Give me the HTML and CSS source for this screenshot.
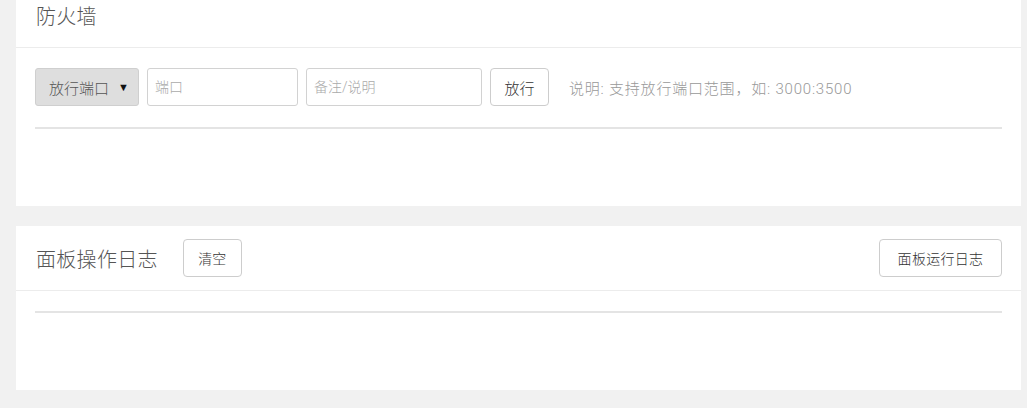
FILE: index.html
```html
<!DOCTYPE html>
<html lang="zh-CN">
<head>
<meta charset="utf-8">
<title>防火墙</title>
<link rel="stylesheet" href="styles.css">
</head>
<body>
<div class="page">
  <section class="card">
    <div class="card-head">
      <h2 class="card-title">防火墙</h2>
    </div>
    <div class="card-body">
      <div class="form-row">
        <div class="select">放行端口<span class="caret">▼</span></div>
        <input class="field field-port" type="text" placeholder="端口">
        <input class="field field-note" type="text" placeholder="备注/说明">
        <button class="btn" type="button">放行</button>
        <span class="hint">说明: 支持放行端口范围，如: 3000:3500</span>
      </div>
      <div class="table-line table-line-gap"></div>
      <div class="table-empty"></div>
    </div>
  </section>

  <section class="card">
    <div class="card-head">
      <h2 class="card-title">面板操作日志</h2>
      <button class="btn btn-clear" type="button">清空</button>
      <button class="btn btn-right" type="button">面板运行日志</button>
    </div>
    <div class="card-body">
      <div class="table-line"></div>
      <div class="table-empty"></div>
    </div>
  </section>
</div>
</body>
</html>
```

FILE: styles.css
```css
html, body {
  margin: 0;
  padding: 0;
  background: #f1f1f1;
  font-family: Roboto, "Noto Sans CJK SC", sans-serif;
  font-weight: 300;
  color: #333;
}

.page {
  padding: 0 6px 0 16px;
  margin-top: -17px;
  display: flex;
  flex-direction: column;
  gap: 20px;
}

.card {
  background: #fff;
}

.card-head {
  height: 64px;
  padding: 0 19px 0 20px;
  border-bottom: 1px solid #ececec;
  display: flex;
  align-items: center;
}

.card-title {
  margin: 0;
  font-size: 20px;
  font-weight: 300;
  color: #555;
  letter-spacing: 0.3px;
}

.card-body {
  padding: 20px 19px 0 19px;
}

.form-row {
  display: flex;
  align-items: center;
  height: 38px;
}

.select {
  box-sizing: border-box;
  width: 104px;
  height: 38px;
  padding: 0 9px 0 13px;
  background: #dedede;
  border: 1px solid #cfcfcf;
  border-radius: 3px;
  display: flex;
  align-items: center;
  justify-content: space-between;
  font-size: 15px;
  font-weight: 300;
  color: #555;
}

.caret {
  font-family: "DejaVu Sans", sans-serif;
  font-size: 11px;
  color: #111;
}

.field {
  box-sizing: border-box;
  height: 38px;
  margin-left: 8px;
  padding: 0 7px;
  border: 1px solid #d2d2d2;
  border-radius: 3px;
  font-family: Roboto, "Noto Sans CJK SC", sans-serif;
  font-weight: 300;
  font-size: 14px;
  color: #333;
  background: #fff;
  outline: none;
}

.field::placeholder {
  color: #aaa;
}

.field-port {
  width: 151px;
}

.field-note {
  width: 176px;
}

.btn {
  box-sizing: border-box;
  height: 38px;
  padding: 0 14px;
  background: #fff;
  border: 1px solid #cdcdcd;
  border-radius: 4px;
  font-family: Roboto, "Noto Sans CJK SC", sans-serif;
  font-weight: 300;
  font-size: 15px;
  color: #333;
  cursor: pointer;
}

.form-row .btn {
  margin-left: 8px;
  width: 59px;
  padding: 0;
}

.hint {
  margin-left: 20px;
  font-size: 15px;
  letter-spacing: 0.8px;
  color: #999;
  white-space: nowrap;
}

.btn-clear {
  margin-left: 25px;
  width: 59px;
  padding: 0;
  font-size: 14px;
}

.btn-right {
  margin-left: auto;
  width: 123px;
  padding: 0;
  font-size: 14px;
  letter-spacing: 0.3px;
}

.table-line {
  height: 2px;
  background: #e4e4e4;
}

.table-line-gap {
  margin-top: 21px;
}

.table-empty {
  height: 77px;
}
```
